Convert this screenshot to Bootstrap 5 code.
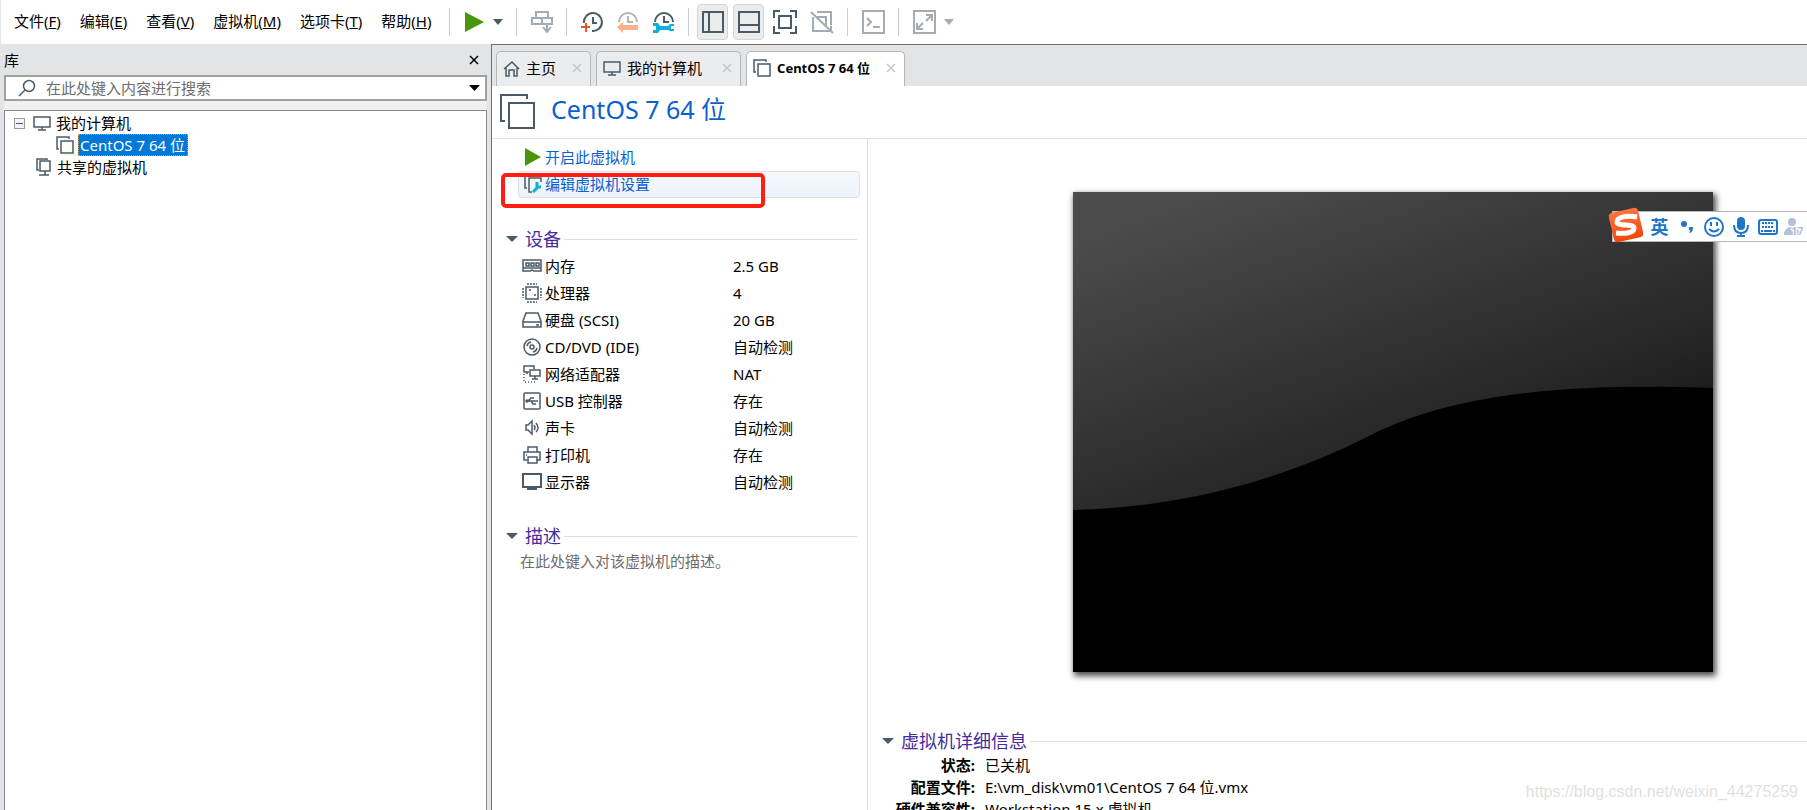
<!DOCTYPE html>
<html lang="zh-CN">
<head>
<meta charset="utf-8">
<meta name="viewport" content="width=device-width, initial-scale=1">
<title>CentOS 7 64 位</title>
<link href="https://cdn.jsdelivr.net/npm/bootstrap@5.3.0/dist/css/bootstrap.min.css" rel="stylesheet">
<style>
:root{--ink:#4a5b68;--chrome:#e3e4e6;--link:#0a60cf;--head:#442c9e;--rule:#dedfe0}
body{font-family:"Noto Sans","Noto Sans CJK SC",sans-serif;font-size:15px;line-height:22px;color:#000;background:#fff}
button{border:0;background:none;padding:0;color:inherit;font-weight:inherit}
svg{display:block;flex:none;fill:none;stroke:var(--ink);stroke-width:2}
.menubar{height:44px;border-left:1px solid var(--chrome);padding-left:4px}
.menu-item{padding:0 10px 3px 9px}
.vsep{width:1px;height:28px;background:#c9cbcd;margin:0 14px 0 13px}
.menu-item + .vsep{margin-left:8px}
.faded{opacity:.5}
.tool-on{width:31px;height:36px;background:#ebecee;border:1px solid #d3d5d7;border-radius:4px}
.library{width:491px;background:var(--chrome);padding:0 4px}
.lib-title{height:31px}
.search-box{height:26px;border:2px solid #a0a1a3;background:#fff;padding:0 5px 0 12px}
.search-box input{border:0;outline:0;padding:0;background:none;min-width:0;margin-left:10px}
.search-box input::placeholder{color:#6d6d6d;opacity:1}
.search-box svg,.tree svg,.vm-tab svg{stroke-width:1.5}
.lib-gap{height:9px;background:#f0f0f0}
.tree{border:1px solid #868b92;border-bottom:0;background:#fff;padding:1px 9px}
.tree-row{height:22px;gap:5px}
.tree-row.child{padding-left:42px;gap:4px}
.tree-row.shared{padding-left:22px;gap:6px}
.picked{background:#0078d7;color:#fff;outline:1px dotted #f80;outline-offset:-1px;padding:0 3px 0 2px;line-height:22px}
.expander{width:11px;height:11px;border:1px solid #999;background:#f4f4f4;margin-right:3px}
.work{border-left:1px solid #6c6f72;border-top:1px solid #6c6f72;min-width:0}
.tabstrip{height:41px;background:var(--chrome);padding:6px 4px 0;gap:5px}
.vm-tab{height:35px;border:1px solid #b4b6b8;border-bottom:0;border-radius:5px 5px 0 0;background:#ebecee;padding:0 8px 2px 6px}
.vm-tab > button:first-of-type{margin-left:6px}
.vm-tab.current{background:#fff;font-size:13px;font-weight:700}
.vm-tab svg.tab-x{stroke:#c4c5c6}
.vm-head{height:53px;border-bottom:1px solid var(--rule);padding:0 8px 2px}
.vm-head h1{font-size:25px;line-height:32px;color:var(--link);font-weight:400;margin:0 0 5px 16px}
.summary{width:376px;border-right:1px solid var(--rule);padding:5px 7px 0 10px}
.cmd{height:27px;padding:0 0 1px 5px;color:var(--link);text-decoration:none;border:1px solid transparent;border-radius:4px;gap:3px;margin-left:16px}
.cmd.hover{border-color:#dcdee0;background:linear-gradient(#f6f8fc,#edf3fd)}
.marker{position:absolute;left:-1px;top:29px;width:264px;height:35px;border:4px solid #ff1e14;border-radius:5px;pointer-events:none}
.sect{height:26px;font-size:18px;color:var(--head);gap:7px;padding:0 3px 0 4px;margin-top:28px}
.sect::after{content:"";flex:1;height:1px;background:var(--rule);margin-left:-4px}
.devices{margin:0 0 0 20px;width:calc(100% - 20px)}
.devices td,.devices th{height:27px;padding:0;font-weight:400}
.devices th{width:211px}
.devices th span{gap:3px}
.hint{color:#6d6d6d;margin:1px 0 0 18px}
.console{min-width:0}
.screen-wrap{padding:53px 94px 0 0}
.screen{width:640px;height:480px;box-shadow:2px 3px 6px 1px rgba(0,0,0,.7)}
.details .sect{margin-top:56px;padding:0 0 0 14px}
.details table{line-height:20px;margin-left:20px}
.details th{width:88px;text-align:right;font-weight:700}
.details td{padding-left:9px}
.ime{position:absolute;right:0;top:211px;width:195px;height:31px;background:#fff;border:1px solid #b5b5bd;border-right:0;padding-left:33px;color:#1f76c8}
.ime svg{stroke:#1f76c8}
.ime-cell{width:27px;flex:none;display:flex;justify-content:center}
.ime .sogou{position:absolute;left:-6px;top:-6px;stroke:none}
.ime-mode{font-size:18px;font-weight:700}
.site-mark{position:absolute;right:9px;bottom:7px;font:16px/22px "Liberation Sans",sans-serif;color:#dfdfdf}
</style>
</head>
<body class="vh-100 overflow-hidden position-relative d-flex flex-column">
<svg width="0" height="0" class="position-absolute" aria-hidden="true">
<defs>
<symbol id="mon" viewBox="0 0 18 15"><path d="M1 1h16v10H1zM9 11v3M5 14h8"/></symbol>
<symbol id="vm" viewBox="0 0 18 18"><path d="M3 13H1V1h12v2"/><path d="M5 5h12v12H5z"/></symbol>
<symbol id="x" viewBox="0 0 10 10"><path d="M1 1l8 8M9 1L1 9"/></symbol>
<symbol id="dn" viewBox="0 0 12 6"><path d="M0 0h12L6 6z" fill="#4a5b68" stroke="none"/></symbol>
<linearGradient id="glass" gradientUnits="userSpaceOnUse" x1="70" y1="20" x2="200" y2="380"><stop offset="0" stop-color="#4c4c4c"/><stop offset=".8" stop-color="#262626"/><stop offset="1" stop-color="#191919"/></linearGradient>
<linearGradient id="sg" x1="0" y1="0" x2="0" y2="1"><stop stop-color="#ff7440"/><stop offset="1" stop-color="#f2460a"/></linearGradient>
</defs>
</svg>

<header class="menubar d-flex align-items-center flex-shrink-0">
<button class="menu-item">文件(<u>F</u>)</button><button class="menu-item">编辑(<u>E</u>)</button><button class="menu-item">查看(<u>V</u>)</button><button class="menu-item">虚拟机(<u>M</u>)</button><button class="menu-item">选项卡(<u>T</u>)</button><button class="menu-item">帮助(<u>H</u>)</button>
<span class="vsep"></span>
<div class="d-flex align-items-center gap-2">
<button aria-label="开机"><svg width="21" height="20"><path d="M1 0v20l19-10z" fill="#48960c" stroke="none"/></svg></button>
<button aria-label="电源选项"><svg width="10" height="6" viewBox="0 0 12 6" preserveAspectRatio="none"><use href="#dn"/></svg></button>
</div>
<span class="vsep"></span>
<button aria-label="发送" class="faded"><svg width="22" height="22"><path d="M5 1h12v6H5zM1 7h10v6H1zM11 7h10v6H11zM16 14v6M12 16l4 5 4-5"/></svg></button>
<span class="vsep"></span>
<div class="d-flex align-items-center" style="gap:14px">
<button aria-label="拍摄快照"><svg width="22" height="22"><path d="M3 12a9 9 0 1 1 8 8M12 6v6h4"/><path d="M5 12v9M0 16h9" style="stroke:#e0592a"/></svg></button>
<button aria-label="恢复快照"><svg width="22" height="22"><path d="M2 11a9 9 0 0 1 18 0M11 5v6h5" style="stroke:#b0b6bb"/><path d="M0 16l6-5v3h15v5H6v3z" fill="#fcb08a" stroke="none"/></svg></button>
<button aria-label="管理快照"><svg width="22" height="22"><path d="M2 11a9 9 0 0 1 18 0M11 5v6h5"/><path d="M0 12h5l2 3h8l2-2h4v2h-3v3h3v2h-4l-2-1H7l-2 3H0v-3h3v-4H0z" fill="#12afd6" stroke="none"/></svg></button>
</div>
<span class="vsep me-2"></span>
<div class="d-flex align-items-center" style="gap:5px">
<button class="tool-on d-flex align-items-center justify-content-center" aria-label="显示库"><svg width="22" height="22"><path d="M1 1h20v20H1zM7 1v20"/></svg></button>
<button class="tool-on d-flex align-items-center justify-content-center" aria-label="缩略图栏"><svg width="22" height="22"><path d="M1 1h20v20H1zM1 14h20"/></svg></button>
</div>
<div class="d-flex align-items-center" style="gap:13px;margin-left:9px">
<button aria-label="全屏"><svg width="24" height="24"><path d="M6 6h12v12H6zM1 8V1h6M17 1h6v7M23 16v7h-6M7 23H1v-7"/></svg></button>
<button aria-label="Unity" class="faded"><svg width="24" height="24"><path d="M7 2h14v13M3 7v14h13M7 7h9v9M1 2l22 21M16 21h5v-5"/></svg></button>
</div>
<span class="vsep"></span>
<button aria-label="控制台视图" class="faded"><svg width="23" height="24"><path d="M1 1h21v22H1zM5 8l4 4-4 4M11 17h7"/></svg></button>
<span class="vsep"></span>
<div class="d-flex align-items-center gap-2 faded">
<button aria-label="自由拉伸"><svg width="23" height="24"><path d="M1 1h21v22H1zM13 11l6-6M13 5h6v6M10 13l-6 6M4 13v6h6"/></svg></button>
<button aria-label="拉伸选项"><svg width="10" height="6" viewBox="0 0 12 6" preserveAspectRatio="none"><use href="#dn"/></svg></button>
</div>
</header>

<div class="d-flex flex-grow-1" style="min-height:0">
<aside class="library d-flex flex-column flex-shrink-0">
<div class="lib-title d-flex align-items-center justify-content-between"><span>库</span><button class="me-2" aria-label="关闭库"><svg width="10" height="10" style="stroke:#000;stroke-width:1.5"><use href="#x"/></svg></button></div>
<label class="search-box d-flex align-items-center flex-shrink-0">
<svg width="18" height="18"><circle cx="11" cy="7" r="5.500"/><path d="M7 11l-6 6"/></svg>
<input class="flex-grow-1" type="text" aria-label="搜索" placeholder="在此处键入内容进行搜索">
<svg width="11" height="6"><path d="M0 0h11L5.500 6z" fill="#000" stroke="none"/></svg>
</label>
<div class="lib-gap flex-shrink-0"></div>
<div class="tree flex-grow-1">
<div class="tree-row d-flex align-items-center"><button class="expander" aria-label="折叠"><svg width="9" height="9"><path d="M1 4.500h7" style="stroke:#3c5aa8;stroke-width:1"/></svg></button><svg width="18" height="15"><use href="#mon"/></svg><span>我的计算机</span></div>
<div class="tree-row child d-flex align-items-center"><svg width="18" height="18"><use href="#vm"/></svg><span class="picked">CentOS 7 64 位</span></div>
<div class="tree-row shared d-flex align-items-center"><svg width="15" height="18"><path d="M3 12H1V1h10v1M4 3h10v10H4zM9 13v4M3 17h10"/></svg><span>共享的虚拟机</span></div>
</div>
</aside>

<main class="work flex-grow-1 d-flex flex-column">
<div class="tabstrip d-flex flex-shrink-0">
<div class="vm-tab d-flex align-items-center"><svg width="17" height="17"><path d="M1 9l8-7 7 7M3 8v8h3v-6h5v6h3V8"/></svg><button>主页</button><button class="ms-3" aria-label="关闭"><svg class="tab-x" width="10" height="10"><use href="#x"/></svg></button></div>
<div class="vm-tab d-flex align-items-center"><svg width="18" height="15"><use href="#mon"/></svg><button class="me-1">我的计算机</button><button class="ms-3" aria-label="关闭"><svg class="tab-x" width="10" height="10"><use href="#x"/></svg></button></div>
<div class="vm-tab current d-flex align-items-center"><svg width="18" height="18"><use href="#vm"/></svg><button>CentOS 7 64 位</button><button class="ms-3" aria-label="关闭"><svg class="tab-x" width="10" height="10"><use href="#x"/></svg></button></div>
</div>
<div class="vm-head d-flex align-items-center flex-shrink-0"><svg width="35" height="35"><path d="M5 27H1V1h26v4"/><path d="M9 9h25v25H9z"/></svg><h1>CentOS 7 64 位</h1></div>

<div class="d-flex flex-grow-1" style="min-height:0">
<section class="summary flex-shrink-0">
<div class="position-relative">
<a href="#" class="cmd d-flex align-items-center"><svg width="18" height="18"><path d="M1 0v18l16-9z" fill="#48960c" stroke="none"/></svg>开启此虚拟机</a>
<a href="#" class="cmd hover d-flex align-items-center"><svg width="18" height="18" style="stroke-width:1.5"><path d="M3 13H1V1h2M17 7V3H5v14h3"/><path d="M9 17l5-5M13 7v5h4" style="stroke:#12afd6;stroke-width:3"/></svg>编辑虚拟机设置</a>
<span class="marker"></span>
</div>
<button class="sect d-flex align-items-center w-100"><svg width="12" height="6"><use href="#dn"/></svg>设备</button>
<table class="devices">
<tr><th scope="row"><span class="d-flex align-items-center"><svg width="20" height="20" style="stroke-width:1.5"><path d="M1 4h18v11h-7l-2-1-2 1H1z"/><path d="M4 7h3v3H4zM9 7h3v3H9zM14 7h3v3h-3zM1 12h18"/></svg>内存</span></th><td>2.5 GB</td></tr>
<tr><th scope="row"><span class="d-flex align-items-center"><svg width="20" height="20" style="stroke-width:1.5"><path d="M4 4h12v12H4z"/><path d="M5 1h10M5 19h10M1 5v10M19 5v10" stroke-dasharray="2 1"/><path d="M7 7h2M12 12h2"/></svg>处理器</span></th><td>4</td></tr>
<tr><th scope="row"><span class="d-flex align-items-center"><svg width="20" height="20" style="stroke-width:1.5"><path d="M4 3h12l3 8v6H1v-6zM1 12h18M14 15h3"/></svg>硬盘 (SCSI)</span></th><td>20 GB</td></tr>
<tr><th scope="row"><span class="d-flex align-items-center"><svg width="20" height="20" style="stroke-width:1.5"><circle cx="10" cy="10" r="8"/><circle cx="10" cy="10" r="2"/><path d="M5 9a5 5 0 0 1 4-4M11 15a5 5 0 0 0 4-4"/></svg>CD/DVD (IDE)</span></th><td>自动检测</td></tr>
<tr><th scope="row"><span class="d-flex align-items-center"><svg width="20" height="20" style="stroke-width:1.5"><path d="M7 8H2V2h10v3M8 6h10v6H8zM13 12v3M10 15h6M5 8v2"/><path d="M2 10v8h11" stroke-dasharray="1 2"/></svg>网络适配器</span></th><td>NAT</td></tr>
<tr><th scope="row"><span class="d-flex align-items-center"><svg width="20" height="20" style="stroke-width:1.5"><rect x="2" y="2" width="16" height="16" rx="1"/><path d="M4 10h12M6 10l3-3h3M9 10l2 3h3"/><circle cx="5" cy="10" r="1"/></svg>USB 控制器</span></th><td>存在</td></tr>
<tr><th scope="row"><span class="d-flex align-items-center"><svg width="20" height="20" style="stroke-width:1.5"><path d="M4 7h2l4-4v13l-4-4H4zM12 7q2 3 0 5M14 5q4 5 0 9"/></svg>声卡</span></th><td>自动检测</td></tr>
<tr><th scope="row"><span class="d-flex align-items-center"><svg width="20" height="20" style="stroke-width:1.5"><path d="M6 7V2h9v5M5 15H2V7h16v8h-3M6 12h9v6H6zM4 10h1"/></svg>打印机</span></th><td>存在</td></tr>
<tr><th scope="row"><span class="d-flex align-items-center"><svg width="20" height="20"><path d="M1 2h18v13H1zM5 17h10"/></svg>显示器</span></th><td>自动检测</td></tr>
</table>
<button class="sect d-flex align-items-center w-100"><svg width="12" height="6"><use href="#dn"/></svg>描述</button>
<p class="hint">在此处键入对该虚拟机的描述。</p>
</section>

<section class="console flex-grow-1">
<div class="screen-wrap d-flex justify-content-end">
<svg class="screen" viewBox="0 0 640 480"><path d="M0 0h640v480H0z" fill="#000" stroke="none"/><path d="M0 0H640V196C520 192 390 196 298 243C200 293 100 315 0 318Z" fill="url(#glass)" stroke="none"/></svg>
</div>
<div class="details">
<button class="sect d-flex align-items-center w-100"><svg width="12" height="6"><use href="#dn"/></svg>虚拟机详细信息</button>
<table>
<tr><th scope="row">状态:</th><td>已关机</td></tr>
<tr><th scope="row">配置文件:</th><td>E:\vm_disk\vm01\CentOS 7 64 位.vmx</td></tr>
<tr><th scope="row">硬件兼容性:</th><td>Workstation 15.x 虚拟机</td></tr>
</table>
</div>
</section>
</div>
</main>
</div>

<div class="ime d-flex align-items-center">
<svg class="sogou" width="38" height="38"><rect x="4" y="4" width="30" height="30" rx="4" fill="url(#sg)" transform="rotate(-13 19 19)"/><path d="M30 11C20 9 10 11 10 16c0 5 17 1 17 6 0 5-9 6-18 5" fill="none" stroke="#fff" stroke-width="5"/></svg>
<button class="ime-cell ime-mode">英</button>
<button class="ime-cell" aria-label="标点"><svg width="12" height="14" style="stroke:none;fill:#1f76c8"><circle cx="3" cy="4" r="3"/><path d="M8 7h4q0 5-3 6l-1-1q2-1 1-2H8z"/></svg></button>
<button class="ime-cell" aria-label="表情"><svg width="20" height="20"><circle cx="10" cy="10" r="9"/><path d="M7 5v4M13 5v4M5 12q5 5 10 0"/></svg></button>
<button class="ime-cell" aria-label="语音"><svg width="16" height="20"><rect x="5" y="1" width="6" height="11" rx="3" fill="#1f76c8"/><path d="M1 8q0 8 7 8t7-8M8 16v3M4 19h8"/></svg></button>
<button class="ime-cell" aria-label="键盘"><svg width="20" height="16"><rect x="1" y="1" width="18" height="14" rx="2"/><path d="M4 4h12M4 8h12" stroke-dasharray="2 1"/><path d="M3 12h2M6 12h8M15 12h2"/></svg></button>
<button class="ime-cell" aria-label="账号"><svg width="22" height="20" style="stroke:none"><circle cx="8" cy="5" r="4" fill="#b5c1d8"/><path d="M0 18q0-8 8-8t7 8z" fill="#b5c1d8"/><text x="7" y="18" font-size="11" font-weight="700" fill="#b5c1d8" style="stroke:#fff;stroke-width:2;paint-order:stroke">17</text></svg></button>
</div>
<div class="site-mark">https://blog.csdn.net/weixin_44275259</div>
<script src="https://cdn.jsdelivr.net/npm/bootstrap@5.3.0/dist/js/bootstrap.bundle.min.js"></script>
</body>
</html>
